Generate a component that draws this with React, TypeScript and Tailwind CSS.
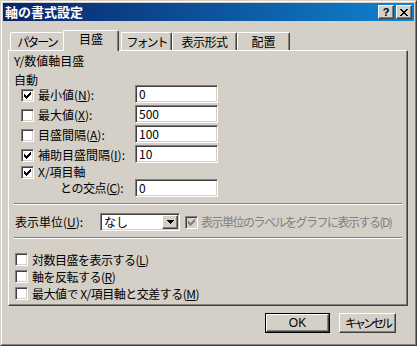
import type { ReactNode } from "react";

const sunken =
  "border border-t-[#808080] border-l-[#808080] border-r-white border-b-white shadow-[inset_1px_1px_0_#404040,inset_-1px_-1px_0_#d4d0c8]";
const raised =
  "border border-t-white border-l-white border-r-[#404040] border-b-[#404040] shadow-[inset_-1px_-1px_0_#808080]";

const CheckMark = ({ color }: { color: string }) => {
  const tops = [2, 3, 4, 3, 2, 1, 0];
  return (
    <svg width="7" height="7" viewBox="0 0 7 7" shapeRendering="crispEdges">
      {tops.map((t, i) => (
        <rect key={i} x={i} y={t} width="1" height="3" fill={color} />
      ))}
    </svg>
  );
};

const CheckBox = ({ checked, disabled }: { checked?: boolean; disabled?: boolean }) => (
  <span
    className={`flex h-[13px] w-[13px] shrink-0 items-center justify-center ${sunken} ${
      disabled ? "bg-[#d4d0c8]" : "bg-white"
    }`}
  >
    {checked && <CheckMark color={disabled ? "#808080" : "#000000"} />}
  </span>
);

const Field = ({ value }: { value: string }) => (
  <div className={`flex h-[18px] w-[83px] items-center bg-white pl-[3px] text-[12px] leading-[14px] ${sunken}`}>
    {value}
  </div>
);

const Key = ({ k }: { k: string }) => <span className="underline underline-offset-[1px]">{k}</span>;

const Row = ({ checked, label, value }: { checked?: boolean; label: ReactNode; value: string }) => (
  <div className="flex h-[20px] items-start">
    <div className="mt-[4px] flex h-[14px] w-[114px] items-center gap-[4px]">
      <CheckBox checked={checked} />
      <span className="whitespace-nowrap leading-[14px]">{label}</span>
    </div>
    <div className="mt-[1px]">
      <Field value={value} />
    </div>
  </div>
);

const Option = ({ label }: { label: ReactNode }) => (
  <div className="flex h-[17px] items-center gap-[4px]">
    <CheckBox />
    <span className="whitespace-nowrap leading-[14px] tracking-[-0.5px]">{label}</span>
  </div>
);

const tabs = [
  { name: "パターン", w: "w-[53px]", tr: "tracking-[-2px]", cls: "border-l border-t border-l-white border-t-white" },
  { name: "目盛", w: "w-[56px]", tr: "", selected: true, cls: "" },
  { name: "フォント", w: "w-[51px] ml-[2px]", tr: "tracking-[-2px]", cls: "" },
  { name: "表示形式", w: "w-[65px]", tr: "tracking-[-0.5px]", cls: "" },
  { name: "配置", w: "w-[53px]", tr: "", cls: "" },
];

export default function App() {
  return (
    <div className="h-[346px] w-[417px] border border-t-[#d4d0c8] border-l-[#d4d0c8] border-r-[#404040] border-b-[#404040] bg-[#d4d0c8] font-['Noto_Sans_CJK_JP',sans-serif] text-[12px] text-black">
      <div className="flex h-full flex-col border border-t-white border-l-white border-r-[#808080] border-b-[#808080] p-[1px]">
        {/* title bar */}
        <div className="flex h-[18px] items-center bg-gradient-to-r from-[#0a246a] to-[#1084d0] pl-[2px] pr-[2px]">
          <span className="text-[13px] font-bold leading-[16px] text-white">軸の書式設定</span>
          <div className="ml-auto flex gap-[2px]">
            <div className={`flex h-[14px] w-[16px] items-center justify-center bg-[#d4d0c8] ${raised}`}>
              <span className="font-['Liberation_Sans',sans-serif] text-[11px] font-bold leading-[11px]">?</span>
            </div>
            <div className={`flex h-[14px] w-[16px] items-center justify-center bg-[#d4d0c8] ${raised}`}>
              <svg width="8" height="7" viewBox="0 0 8 7" shapeRendering="crispEdges">
                {[0, 1, 2, 3, 4, 5, 6].map((i) => (
                  <g key={i}>
                    <rect x={i} y={i} width="2" height="1" fill="#000" />
                    <rect x={6 - i} y={i} width="2" height="1" fill="#000" />
                  </g>
                ))}
              </svg>
            </div>
          </div>
        </div>

        <div className="px-[5px]">
          {/* tabs */}
          <div className="mt-[9px] flex h-[20px] items-end pl-[2px]">
            {tabs.map((t) =>
              t.selected ? (
                <div
                  key={t.name}
                  className={`relative z-10 -mb-[1px] flex h-[21px] ${t.w} items-center justify-center rounded-t-[2px] border-l border-r border-t border-l-white border-r-[#404040] border-t-white bg-[#d4d0c8] pb-[4px] shadow-[inset_-1px_0_0_#808080]`}
                >
                  <span className="leading-[14px]">{t.name}</span>
                </div>
              ) : (
                <div
                  key={t.name}
                  className={`flex h-[18px] ${t.w} items-center justify-center rounded-t-[2px] ${
                    t.cls ||
                    "border-l border-r border-t border-l-white border-r-[#404040] border-t-white shadow-[inset_-1px_0_0_#808080]"
                  }`}
                >
                  <span className={`whitespace-nowrap leading-[14px] ${t.tr}`}>{t.name}</span>
                </div>
              )
            )}
          </div>

          {/* panel */}
          <div className={`h-[256px] w-[400px] ${raised}`}>
            <div className="flex flex-col px-[5px] pt-[3px]">
              <div className="h-[14px] leading-[14px]">Y/数値軸目盛</div>
              <div className="mt-[5px] h-[14px] leading-[14px]">自動</div>

              <div className="-mt-[3px] pl-[7px]">
                <Row checked label={<>最小値(<Key k="N" />):</>} value="0" />
                <Row label={<>最大値(<Key k="X" />):</>} value="500" />
                <Row label={<>目盛間隔(<Key k="A" />):</>} value="100" />
                <Row checked label={<>補助目盛間隔(<Key k="I" />):</>} value="10" />
                <div className="mt-[1px] flex h-[14px] items-center gap-[4px]">
                  <CheckBox checked />
                  <span className="leading-[14px]">X/項目軸</span>
                </div>
                <div className="flex h-[18px] items-center">
                  <span className="w-[114px] whitespace-nowrap pl-[39px] leading-[14px] tracking-[-0.5px]">
                    との交点(<Key k="C" />):
                  </span>
                  <Field value="0" />
                </div>
              </div>

              <div className="mt-[6px] h-[2px] border-t border-b border-t-[#808080] border-b-white" />

              <div className="mt-[8px] flex h-[18px] items-center pl-[1px]">
                <span className="w-[85px] shrink-0 whitespace-nowrap leading-[14px]">
                  表示単位(<Key k="U" />):
                </span>
                <div className={`flex h-[18px] w-[80px] shrink-0 items-center bg-white pl-[3px] ${sunken}`}>
                  <span className="leading-[14px]">なし</span>
                  <div className={`ml-auto mr-[1px] flex h-[14px] w-[16px] items-center justify-center bg-[#d4d0c8] ${raised}`}>
                    <svg width="7" height="4" viewBox="0 0 7 4" shapeRendering="crispEdges">
                      <polygon points="0,0 7,0 3.5,4" fill="#000" />
                    </svg>
                  </div>
                </div>
                <div className="ml-[5px] flex items-center gap-[3px]">
                  <CheckBox checked disabled />
                  <span className="whitespace-nowrap leading-[14px] tracking-[-1.5px] text-[#808080]">
                    表示単位のラベルをグラフに表示する(D)
                  </span>
                </div>
              </div>

              <div className="mt-[6px] h-[2px] border-t border-b border-t-[#808080] border-b-white" />

              <div className="mt-[12px] pl-[1px]">
                <Option label={<>対数目盛を表示する(<Key k="L" />)</>} />
                <Option label={<>軸を反転する(<Key k="R" />)</>} />
                <Option label={<>最大値で X/項目軸と交差する(<Key k="M" />)</>} />
              </div>
            </div>
          </div>

          {/* buttons */}
          <div className="mt-[7px] flex justify-end gap-[9px] pr-[13px]">
            <div className="h-[20px] w-[65px] border border-black">
              <div className={`flex h-full items-center justify-center bg-[#d4d0c8] ${raised}`}>
                <span className="font-['Liberation_Sans',sans-serif] leading-[14px]">OK</span>
              </div>
            </div>
            <div className={`flex h-[20px] w-[57px] items-center justify-center bg-[#d4d0c8] ${raised}`}>
              <span className="whitespace-nowrap leading-[14px] tracking-[-3px]">キャンセル</span>
            </div>
          </div>
        </div>
      </div>
    </div>
  );
}
